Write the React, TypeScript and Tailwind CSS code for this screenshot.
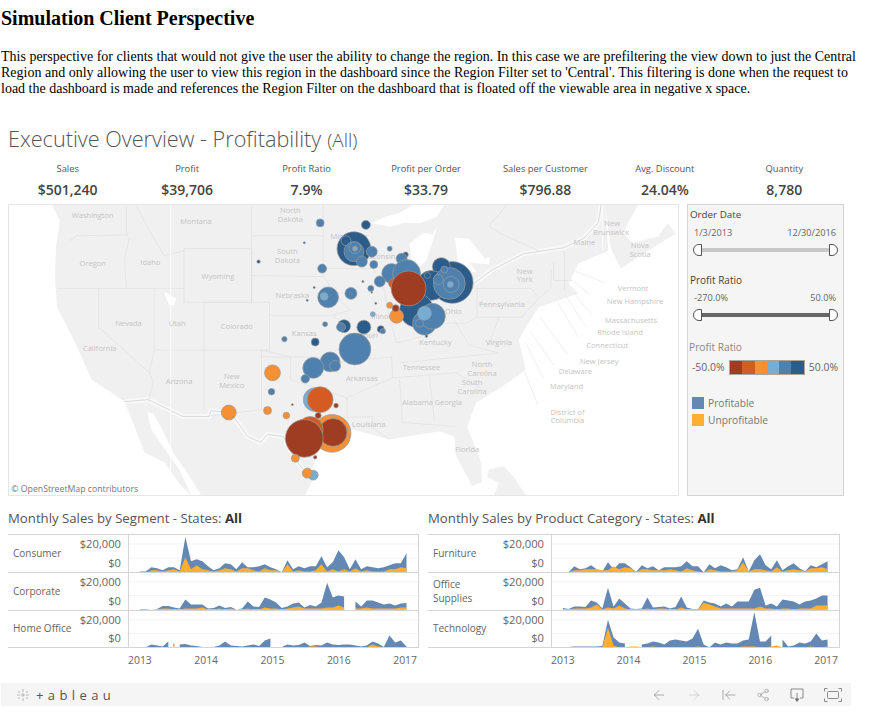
import { ArrowLeft, ArrowRight, ArrowLeftToLine, Share2 } from 'lucide-react';

const FONT = 'font-["Open_Sans",sans-serif]';

const BLUE_D = '#2b5c8a';
const BLUE_M = '#4f81af';
const BLUE_L = '#77acd3';
const OR_L = '#f69035';
const OR_M = '#d45b21';
const OR_D = '#9e3d22';

const kpis = [
  ['Sales', '$501,240'],
  ['Profit', '$39,706'],
  ['Profit Ratio', '7.9%'],
  ['Profit per Order', '$33.79'],
  ['Sales per Customer', '$796.88'],
  ['Avg. Discount', '24.04%'],
  ['Quantity', '8,780'],
];

// x, y, r, colour. page order = paint order
const bubbles: [number, number, number, string][] = [
  [320, 222, 4, BLUE_M],
  [366, 224, 4.5, BLUE_D],
  [354, 248, 17, BLUE_D],
  [346, 240, 5, BLUE_D],
  [354, 251, 10, BLUE_M],
  [355, 247, 6, BLUE_M],
  [355, 248, 2.5, BLUE_L],
  [372, 251, 5.5, BLUE_M],
  [362, 261, 5.5, BLUE_M],
  [374, 264, 4, BLUE_M],
  [390, 248, 2.5, BLUE_M],
  [406, 254, 2.7, BLUE_D],
  [402, 258, 5.5, BLUE_M],
  [322, 268, 4.5, BLUE_M],
  [304, 242, 1, BLUE_D],
  [258, 261, 1.7, BLUE_D],
  [392, 273, 10, BLUE_M],
  [407, 273, 14, BLUE_M],
  [380, 281, 5.5, BLUE_M],
  [328, 297, 10.5, BLUE_M],
  [324, 296, 4, BLUE_L],
  [351, 293, 6, BLUE_M],
  [351, 293, 1, BLUE_D],
  [371, 288, 3, BLUE_M],
  [363, 281, 1, BLUE_D],
  [314, 287, 1, BLUE_D],
  [307, 300, 1, BLUE_D],
  [372, 292, 0.8, BLUE_D],
  [376, 303, 1, BLUE_D],
  [453, 282, 21, BLUE_D],
  [442, 266, 9, BLUE_D],
  [432, 285, 15, BLUE_D],
  [450, 283, 16, BLUE_M],
  [452, 284, 8, BLUE_M],
  [451, 284, 3, BLUE_L],
  [439, 279, 5, BLUE_M],
  [445, 269, 3.5, BLUE_M],
  [428, 275, 3, BLUE_D],
  [417, 310, 17, BLUE_D],
  [425, 323, 12, BLUE_M],
  [433, 316, 13, BLUE_M],
  [425, 313, 7, BLUE_L],
  [420, 323, 4, BLUE_M],
  [427, 336, 1.3, BLUE_D],
  [394, 283, 5, OR_M],
  [409, 288, 17.5, OR_D],
  [397, 316, 7, OR_L],
  [396, 308, 3.5, OR_D],
  [390, 305, 3, OR_L],
  [373, 314, 2.5, BLUE_L],
  [325, 324, 2.5, BLUE_M],
  [344, 326, 6.5, BLUE_D],
  [341, 327, 4.5, BLUE_M],
  [364, 327, 7, BLUE_D],
  [381, 329, 3.5, BLUE_D],
  [383, 331, 2.7, BLUE_M],
  [284, 339, 2.7, BLUE_M],
  [315, 342, 4, BLUE_D],
  [355, 349, 16, BLUE_M],
  [330, 362, 10, BLUE_M],
  [335, 366, 5.5, BLUE_M],
  [313, 368, 10.5, BLUE_M],
  [305, 379, 4.3, BLUE_M],
  [272, 373, 8, OR_L],
  [271, 392, 3.3, BLUE_M],
  [267, 411, 4, OR_L],
  [228, 413, 7.5, OR_L],
  [286, 416, 3.3, OR_L],
  [292, 405, 1, OR_D],
  [315, 400, 12, BLUE_L],
  [320, 400, 13, OR_M],
  [336, 406, 2.3, OR_D],
  [318, 416, 3, OR_D],
  [332, 434, 19, OR_L],
  [333, 433, 14, OR_D],
  [310, 430, 13, OR_M],
  [304, 439, 19, OR_D],
  [295, 459, 4, OR_L],
  [315, 458, 1.7, OR_D],
  [313, 476, 5, BLUE_L],
  [307, 474, 5, OR_L],
];

// x, y, label - second line handled as its own entry
const mapLabels: [number, number, string][] = [
  [91, 217, 'Washington'],
  [195, 223, 'Montana'],
  [290, 212, 'North'],
  [290, 221, 'Dakota'],
  [91, 265, 'Oregon'],
  [149, 264, 'Idaho'],
  [217, 279, 'Wyoming'],
  [287, 253, 'South'],
  [287, 262, 'Dakota'],
  [292, 298, 'Nebraska'],
  [127, 326, 'Nevada'],
  [176, 326, 'Utah'],
  [236, 329, 'Colorado'],
  [98, 351, 'California'],
  [178, 384, 'Arizona'],
  [231, 379, 'New'],
  [231, 388, 'Mexico'],
  [304, 336, 'Kansas'],
  [362, 381, 'Arkansas'],
  [349, 238, 'Minnesota'],
  [378, 258, 'Wisconsin'],
  [383, 319, 'Illinois'],
  [363, 338, 'Missouri'],
  [436, 345, 'Kentucky'],
  [422, 370, 'Tennessee'],
  [483, 367, 'North'],
  [483, 376, 'Carolina'],
  [473, 385, 'South'],
  [473, 394, 'Carolina'],
  [418, 405, 'Alabama'],
  [449, 405, 'Georgia'],
  [369, 428, 'Louisiana'],
  [468, 453, 'Florida'],
  [454, 314, 'Ohio'],
  [503, 307, 'Pennsylvania'],
  [526, 273, 'New'],
  [526, 282, 'York'],
  [500, 345, 'Virginia'],
  [586, 244, 'Maine'],
  [614, 225, 'New'],
  [613, 234, 'Brunswick'],
  [642, 247, 'Nova'],
  [642, 256, 'Scotia'],
  [635, 291, 'Vermont'],
  [637, 304, 'New Hampshire'],
  [633, 323, 'Massachusetts'],
  [622, 335, 'Rhode Island'],
  [609, 348, 'Connecticut'],
  [601, 364, 'New Jersey'],
  [577, 374, 'Delaware'],
  [568, 389, 'Maryland'],
  [569, 415, 'District of'],
  [569, 424, 'Columbia'],
];

const stateLines = [
  '68,240 75,235 127,234',
  '125,205 125,235',
  '128,237 123,257 125,288',
  '135,205 150,233 163,255 183,250',
  '183,248 251,248 251,302 183,302 183,248',
  '55,288 183,288',
  '97,288 97,327 148,373',
  '153,288 153,350 203,350',
  '203,302 269,302 269,350 203,350 203,410',
  '203,302 203,350',
  '261,350 261,410 205,417',
  '153,350 148,373 152,382 147,402',
  '251,205 251,302',
  '251,235 323,235',
  '251,275 323,276',
  '269,315 333,315 345,328 345,357 261,357',
  '261,350 290,357 290,380 347,398 347,418',
  '323,205 323,268 323,276 340,300 350,310 333,315',
  '323,268 373,268 385,290 388,310 397,343',
  '340,362 392,357 393,378 347,398',
  '400,363 500,353',
  '393,378 457,373 487,392',
  '400,380 403,423',
  '430,375 435,423',
  '403,423 457,427',
  '347,418 373,417 372,428 390,440',
  '397,343 420,337 443,323 467,323 478,317',
  '478,288 478,317 523,317 540,298 533,288 478,288',
  '415,270 420,320',
  '455,320 470,345 500,353',
  '500,317 490,345',
  '540,298 552,288 553,270',
  '555,262 555,280 574,280',
  '566,252 566,290',
  '508,204 490,225 500,232 540,250',
];

const leaderLines = [
  '575,270 608,283',
  '572,278 592,295',
  '575,292 594,315',
  '567,295 588,327',
  '559,302 580,337',
  '541,317 569,354',
  '532,332 555,365',
  '527,343 545,379',
  '526,372 539,405',
];

function MapPanel() {
  return (
    <svg
      className="block h-[292px] w-[671px] shrink-0 border border-[#e6e6e6]"
      viewBox="8 204 671 292"
      fontFamily='"Open Sans", sans-serif'
    >
      <rect x="8" y="204" width="671" height="292" fill="#ffffff" />
      {/* land */}
      <polygon
        fill="#f0f0f0"
        points="50,204 58,220 54,245 53,277 55,307 72,340 90,380 110,393 123,402 133,427 143,453 163,463 180,487 190,496 203,496 187,477 173,463 167,447 147,413 160,430 173,463 187,477 203,496 305,496 313,480 310,473 320,450 347,433 353,430 390,440 407,437 440,432 455,437 457,457 473,487 483,483 482,463 468,427 477,403 503,387 527,370 520,340 527,327 540,307 580,293 570,283 580,263 610,250 607,204"
      />
      <polygon
        fill="#f0f0f0"
        points="607,204 612,245 617,257 623,268 650,250 678,233 670,222 660,236 635,242 625,233 631,220 640,204"
      />
      <polygon fill="#f0f0f0" points="490,470 505,467 515,478 527,496 495,496 500,484 488,478" />
      {/* gulf of california */}
      <polygon fill="#ffffff" points="146,413 152,414 160,428 173,455 186,473 200,496 190,496 178,470 165,452 150,430" />
      {/* lakes */}
      <polygon fill="#ffffff" points="372,222 385,216 400,212 413,204 445,204 437,216 421,222 405,222 390,226" />
      <polygon fill="#ffffff" points="410,243 424,232 433,234 438,226 427,260 418,268 412,258" />
      <polygon fill="#ffffff" points="456,237 470,238 486,258 491,256 490,264 470,262 478,272 462,270 458,258" />
      {/* border halos */}
      <polyline
        fill="none"
        stroke="#f8f8f8"
        strokeWidth="5"
        points="123,402 147,400 182,417 208,417 210,411 230,413 247,437 260,443 267,435 283,437 293,457 300,467 313,480"
      />
      <polyline
        fill="none"
        stroke="#f8f8f8"
        strokeWidth="5"
        points="475,283 492,270 525,253 565,247 585,238 600,222 603,204"
      />
      <polyline
        fill="none"
        stroke="#d2d2d2"
        strokeWidth="0.8"
        points="123,402 147,400 182,417 208,417 210,411 230,413 247,437 260,443 267,435 283,437 293,457 300,467 313,480"
      />
      <polyline
        fill="none"
        stroke="#d2d2d2"
        strokeWidth="0.8"
        points="475,283 492,270 525,253 565,247 585,238 600,222 603,204"
      />
      {stateLines.map((p, i) => (
        <polyline key={i} points={p} fill="none" stroke="#e0e0e0" strokeWidth="0.7" />
      ))}
      {leaderLines.map((p, i) => (
        <polyline key={i} points={p} fill="none" stroke="#e6e6e6" strokeWidth="0.7" />
      ))}
      <polygon fill="#ffffff" points="163,292 167,293 170,296 175,298 173,305 168,305 165,298" />
      <line x1="169.5" y1="204" x2="169.5" y2="480" stroke="#ffffff" strokeWidth="0.8" />
      <line x1="604.5" y1="204" x2="604.5" y2="250" stroke="#ffffff" strokeWidth="0.8" />
      <g fill="#c4c4c4" fontSize="7.6" textAnchor="middle">
        {mapLabels.map(([x, y, t]) => (
          <text key={`${t}${x}`} x={x} y={y}>
            {t}
          </text>
        ))}
      </g>
      {bubbles.map(([x, y, r, c], i) => (
        <circle key={i} cx={x} cy={y} r={r} fill={c} stroke="#9a9a9a" strokeWidth="0.7" />
      ))}
      <text x="9" y="493" fontSize="8.8" fill="#777777">
        © OpenStreetMap contributors
      </text>
    </svg>
  );
}

function RangeSlider({ from, to, track }: { from: string; to: string; track: string }) {
  return (
    <div>
      <div className="mt-[5px] flex justify-between pl-[5px] pr-[2px] text-[9.2px] leading-[12px] text-[#666]">
        <span>{from}</span>
        <span>{to}</span>
      </div>
      <div className="mt-[5px] flex items-center pl-[4px]">
        <div className="h-[12px] w-[9px] rounded-l-full border border-[#555] bg-white" />
        <div className={`h-[4px] flex-1 ${track}`} />
        <div className="h-[12px] w-[9px] rounded-r-full border border-[#555] bg-white" />
      </div>
    </div>
  );
}

function FilterPanel() {
  return (
    <div className="flex h-[292px] w-[157px] shrink-0 flex-col border border-[#d4d4d4] bg-[#f5f5f5] pl-[1px] pr-[5px] pt-[3px]">
      <div className="pl-[1px] text-[9.8px] leading-[14px] text-[#444]">Order Date</div>
      <RangeSlider from="1/3/2013" to="12/30/2016" track="bg-[#c8c8c8]" />
      <div className="mt-[17px] pl-[1px] text-[10px] font-medium leading-[14px] text-[#444]">Profit Ratio</div>
      <RangeSlider from="-270.0%" to="50.0%" track="bg-[#666666]" />
      <div className="mt-[19px] text-[10.2px] leading-[14px] text-[#888]">Profit Ratio</div>
      <div className="mt-[6px] flex items-center text-[10.4px] leading-[15px] text-[#666]">
        <span className="ml-[3px] w-[37px] whitespace-nowrap">-50.0%</span>
        <div className="flex h-[15px] w-[76px] shrink-0 border border-[#a9a79b]">
          <div className="flex-1 bg-[#9e3d22]" />
          <div className="flex-1 bg-[#d45b21]" />
          <div className="flex-1 bg-[#f69035]" />
          <div className="flex-1 bg-[#77acd3]" />
          <div className="flex-1 bg-[#4f81af]" />
          <div className="flex-1 bg-[#2b5c8a]" />
        </div>
        <span className="ml-[4px]">50.0%</span>
      </div>
      <div className="mt-[22px] flex items-center pl-[3px] text-[10.2px] leading-[12px] text-[#777]">
        <div className="mr-[4px] h-[12px] w-[12px] bg-[#6388b4]" />
        Profitable
      </div>
      <div className="mt-[5px] flex items-center pl-[3px] text-[10.2px] leading-[12px] text-[#777]">
        <div className="mr-[4px] h-[12px] w-[12px] bg-[#ffae34]" />
        Unprofitable
      </div>
    </div>
  );
}

type Series = (number | null)[];

// split a series on its gaps and return closed polygons, px per month = 5.67
function areaPolys(values: Series, base: number) {
  const polys: string[] = [];
  let run: string[] = [];
  const flush = (lastX: number, firstX: number) => {
    if (run.length) polys.push(`${firstX},${base} ${run.join(' ')} ${lastX},${base}`);
    run = [];
  };
  let first = 0;
  let last = 0;
  values.forEach((v, i) => {
    const x = +(5.67 * i).toFixed(2);
    if (v === null) {
      flush(last, first);
      return;
    }
    if (!run.length) first = x;
    last = x;
    run.push(`${x},${base - v}`);
  });
  flush(last, first);
  return polys;
}

function AreaRow({ blue, orange, tick }: { blue: Series; orange: Series; tick?: number }) {
  return (
    <svg className="absolute inset-0 h-full w-full overflow-hidden" viewBox="0 0 289 37" preserveAspectRatio="none">
      <line x1="0" y1="9" x2="289" y2="9" stroke="#f3f3f3" />
      <line x1="0" y1="23" x2="289" y2="23" stroke="#f3f3f3" />
      <g transform="translate(11 0)">
        {areaPolys(blue, 37).map((p, i) => (
          <polygon key={i} points={p} fill="#6388b4" />
        ))}
        {areaPolys(orange, 37).map((p, i) => (
          <polygon key={i} points={p} fill="#ffae34" />
        ))}
        {tick !== undefined && <rect x={tick} y="33" width="1.5" height="4" fill="#ffae34" />}
      </g>
    </svg>
  );
}

type Row = { label: string[]; blue: Series; orange: Series; tick?: number };

const segmentRows: Row[] = [
  {
    label: ['Consumer'],
    blue: [1, 1, 5, 4, 2, 5, 5, 2, 35, 11, 13, 11, 6, 2, 4, 9, 8, 3, 10, 5, 5, 6, 8, 5, 3, 0, 12, 3, 6, 4, 6, 6, 16, 5, 10, 22, 15, 3, 13, 3, 6, 5, 4, 5, 7, 9, 9, 19],
    orange: [0, 0, 2, 2, 1, 2, 3, 1, 15, 3, 7, 3, 2, 1, 2, 4, 3, 1, 4, 4, 2, 1, 4, 2, 2, 0, 8, 1, 2, 1, 1, 2, 8, 1, 3, 1, 3, 1, 4, 1, 2, 1, 1, 1, 3, 3, 5, 4],
  },
  {
    label: ['Corporate'],
    blue: [0.5, 0.5, 0, 0.5, 3.5, 3.5, 2, 1, 10, 5, 5, 5, 1, 1.5, 4, 1.5, 2.5, 0, 1, 8, 3, 2.5, 12, 10, 7, 1.5, 3, 6, 7, 2, 4.5, 3, 7, 27, 12, 14, 13, null, 8, 3, 9, 9, 7, 5, 6, 4, 6, 6.5],
    orange: [0, 0, 0, 0, 1, 1, 0, 0, 1, 1, 1, 2, 0, 0, 1, 0, 1, 0, 0, 1, 0, 0, 2, 1, 1, 0, 1, 2, 3, 1, 1, 1, 1, 2, 2, 4, 2, null, 1, 1, 2, 1, 1, 1, 1, 1, 2, 2],
  },
  {
    label: ['Home Office'],
    blue: [0.3, 0, 3, 2, 1, 6, null, 3, 3.5, 2, 1.5, 0.5, 0.5, 0.5, 2, 6, 2, 1.5, 1, 2, 3, 1.5, 7, 9, null, 0.5, 3, 2, 2.5, 5, 1.5, 2.5, 2, 5, 3, 2.5, 3, 3, 2, 1, 2, 6, 4, 0.5, 12, 5, 7, 1],
    orange: [0.5, 0, 0.5, 0, 0, 0, null, 0, 0, 0, 0, 0.5, 0.5, 0.5, 0, 0, 0, 0, 0, 0, 0, 0, 0.5, 0, null, 0, 0, 0, 0, 0, 1, 1, 0, 0, 0, 0, 0, 0, 0, 0, 0, 3, 1, 0, 0, 0, 0, 0],
    tick: 33,
  },
];

const categoryRows: Row[] = [
  {
    label: ['Furniture'],
    blue: [0, 0, 6, 3, 4, 7, 3, 1, 10, 3, 9, 9, 5, 0.5, 7, 4, 6, 2, 5, 5, 5, 6, 11, 6, 6, 0, 8, 4, 7, 5, 2, 3, 15, 1, 12, 18, 7, 3, 12, 2, 6, 9, 4, 1, 7, 5, 8, 11],
    orange: [0, 0, 2, 2, 3, 3, 3, 2, 2, 6, 3, 5, 4, 0.5, 3, 3, 2, 2, 2, 3, 2, 1, 4, 2, 1, 0, 3, 2, 1, 1, 1, 2, 10, 1, 3, 3, 2, 1, 5, 1, 2, 3, 2, 1, 4, 4, 5, 3],
  },
  {
    label: ['Office', 'Supplies'],
    blue: [1.5, 0.5, 3, 3, 2.5, 9, 7, 1, 22, 3, 11, 6, 1, 0.5, 1, 12, 2, 2.5, 3, 1, 2.5, 13, 2, 0.5, 0.5, 9, 7, 6, 3, 6, 3, 8, 8, 8, 20, 22, 4, 6, 3, 10, 9, 8, 5, 8, 9, 11, 14, 14],
    orange: [0, 0, 1, 1, 1, 2, 5, 0, 2, 1, 4, 1, 0, 0, 0, 1, 0, 1, 1, 0, 0, 2, 0, 0, 0, 7, 5, 3, 1, 1, 1, 1, 1, 1, 1, 3, 1, 1, 0, 1, 1, 0, 1, 1, 1, 4, 4, 4],
  },
  {
    label: ['Technology'],
    blue: [0, 0.5, 1, 1, 1, 1, 1, 1.5, 28, 10, 5, 4, null, null, 3, 4, 6, 5, 3, 7, 8, 7, 6, 9, 19, 3, 0, 5, 3, 5, 4, 4, 7, 8, 36, 6, 6, 12, null, 8, 1, 2, 5, 4, 6, 14, 7, 8],
    orange: [0, 0, 0, 0, 0, 0, 0, 0.5, 20, 2, 0, 0, 1, 1, 0, 0, 1, 0, 0, 0, 0, 0, 0, 0, 1, 0, 0, 0, 0, 0, 0, 0, 1, 1, 1, 0, 0, 1, 2, 0, 0, 0, 0, 0, 1, 0, 0, 1],
  },
];

function ChartBlock({
  title,
  rows,
  labelW,
  width,
  years,
}: {
  title: string;
  rows: Row[];
  labelW: number;
  width: string;
  years: string;
}) {
  return (
    <div className={width}>
      <div className="h-[16px] whitespace-nowrap text-[13.2px] leading-[16px] text-[#555]">
        {title} <b className="font-bold text-[#333]">All</b>
      </div>
      <div className="mt-[8px] border-y border-[#d4d4d4]">
        {rows.map((r, i) => (
          <div
            key={r.label[0]}
            className={`flex h-[37.4px] border-[#d4d4d4] text-[10px] text-[#666] ${i > 0 ? 'border-t' : ''}`}
          >
            <div className="flex flex-col justify-center pl-[5px] leading-[13.5px]" style={{ width: labelW }}>
              {r.label.map((l) => (
                <span key={l}>{l}</span>
              ))}
            </div>
            <div className="flex w-[54px] flex-col justify-between py-[2px] pr-[7px] text-right text-[11.2px]">
              <span className="leading-[14px]">$20,000</span>
              <span className="leading-[14px]">$0</span>
            </div>
            <div className="relative flex-1 border-x border-[#d4d4d4]">
              <AreaRow blue={r.blue} orange={r.orange} tick={r.tick} />
            </div>
          </div>
        ))}
      </div>
      <div className={`mt-[5px] flex justify-between text-[10.4px] leading-[14px] text-[#666] ${years}`}>
        <span>2013</span>
        <span>2014</span>
        <span>2015</span>
        <span>2016</span>
        <span>2017</span>
      </div>
    </div>
  );
}

function TableauLogo() {
  const marks = [
    [7, 1, 7, 4],
    [7, 10, 7, 13],
    [1, 7, 4, 7],
    [10, 7, 13, 7],
    [3, 3, 3, 5],
    [11, 3, 11, 5],
    [3, 9, 3, 11],
    [11, 9, 11, 11],
    [5, 7, 9, 7],
    [7, 5, 7, 9],
  ];
  return (
    <svg className="h-[14px] w-[14px]" viewBox="0 0 14 14" stroke="#a8a8a8" strokeWidth="0.8">
      {marks.map((m, i) => (
        <line key={i} x1={m[0]} y1={m[1]} x2={m[2]} y2={m[3]} />
      ))}
    </svg>
  );
}

function DownloadIcon() {
  return (
    <svg className="h-[16px] w-[16px]" viewBox="0 0 16 16" fill="none" stroke="#8a8a8a" strokeWidth="1">
      <path d="M5 11H2V2h12v9h-3" />
      <path d="M8 6v7" />
      <path d="M5.5 11.5 8 15l2.5-3.5z" fill="#6a6a6a" stroke="none" />
    </svg>
  );
}

function FullscreenIcon() {
  return (
    <svg className="h-[14px] w-[18px]" viewBox="0 0 18 14" fill="none" stroke="#8a8a8a" strokeWidth="1">
      <rect x="3.5" y="3.5" width="11" height="7" rx="1" />
      <path d="M.5 3.5v-3h3M14.5.5h3v3M17.5 10.5v3h-3M3.5 13.5h-3v-3" />
    </svg>
  );
}

function Toolbar() {
  return (
    <div className="ml-[1px] mt-[16px] flex h-[23px] w-[850px] items-center justify-between bg-[#f5f5f5] pl-[15px] pr-[9px]">
      <div className="flex items-center gap-[6px]">
        <TableauLogo />
        <span className="text-[13px] leading-[16px] tracking-[4.4px] text-[#555]">+ableau</span>
      </div>
      <div className="flex items-center gap-[19px] text-[#8a8a8a]">
        <ArrowLeft size={16} strokeWidth={1} />
        <ArrowRight size={16} strokeWidth={1} className="text-[#c4c4c4]" />
        <ArrowLeftToLine size={16} strokeWidth={1} />
        <Share2 size={14} strokeWidth={1} />
        <DownloadIcon />
        <FullscreenIcon />
      </div>
    </div>
  );
}

export default function App() {
  return (
    <div className="h-[723px] w-[871px] overflow-hidden bg-white text-black">
      <div className='pl-[1px] pr-[9px] font-["Liberation_Serif",serif]'>
        <h1 className="pt-[8px] text-[20px] font-bold leading-[21px]">Simulation Client Perspective</h1>
        <p className="mt-[20px] text-[14px] leading-[16px]">
          This perspective for clients that would not give the user the ability to change the region. In this case we are
          prefiltering the view down to just the Central Region and only allowing the user to view this region in the
          dashboard since the Region Filter set to 'Central'. This filtering is done when the request to load the dashboard
          is made and references the Region Filter on the dashboard that is floated off the viewable area in negative x
          space.
        </p>
      </div>

      <div className={FONT}>
        <div className="mt-[27px] flex h-[32px] items-baseline pl-[8px] text-[#555]">
          <span className="text-[21.65px] font-light leading-[30px]">Executive Overview - Profitability</span>
          <span className="ml-[6px] text-[19px] font-light leading-[30px]">(All)</span>
        </div>
        <div className="ml-[8px] mt-[6px] grid w-[836px] grid-cols-7 text-center">
          {kpis.map(([name, value]) => (
            <div key={name}>
              <div className="text-[9.4px] leading-[13px] text-[#555]">{name}</div>
              <div className="mt-[5px] text-[14px] font-semibold leading-[19px] text-[#444]">{value}</div>
            </div>
          ))}
        </div>
        <div className="ml-[8px] mt-[5px] flex gap-[8px]">
          <MapPanel />
          <FilterPanel />
        </div>
        <div className="ml-[8px] mt-[14px] flex gap-[9px]">
          <ChartBlock
            title="Monthly Sales by Segment - States:"
            rows={segmentRows}
            labelW={66}
            width="w-[411px]"
            years="pl-[120px] pr-[2px]"
          />
          <ChartBlock
            title="Monthly Sales by Product Category - States:"
            rows={categoryRows}
            labelW={69}
            width="w-[412px]"
            years="pl-[123px] pr-[2px]"
          />
        </div>
        <Toolbar />
      </div>
    </div>
  );
}
